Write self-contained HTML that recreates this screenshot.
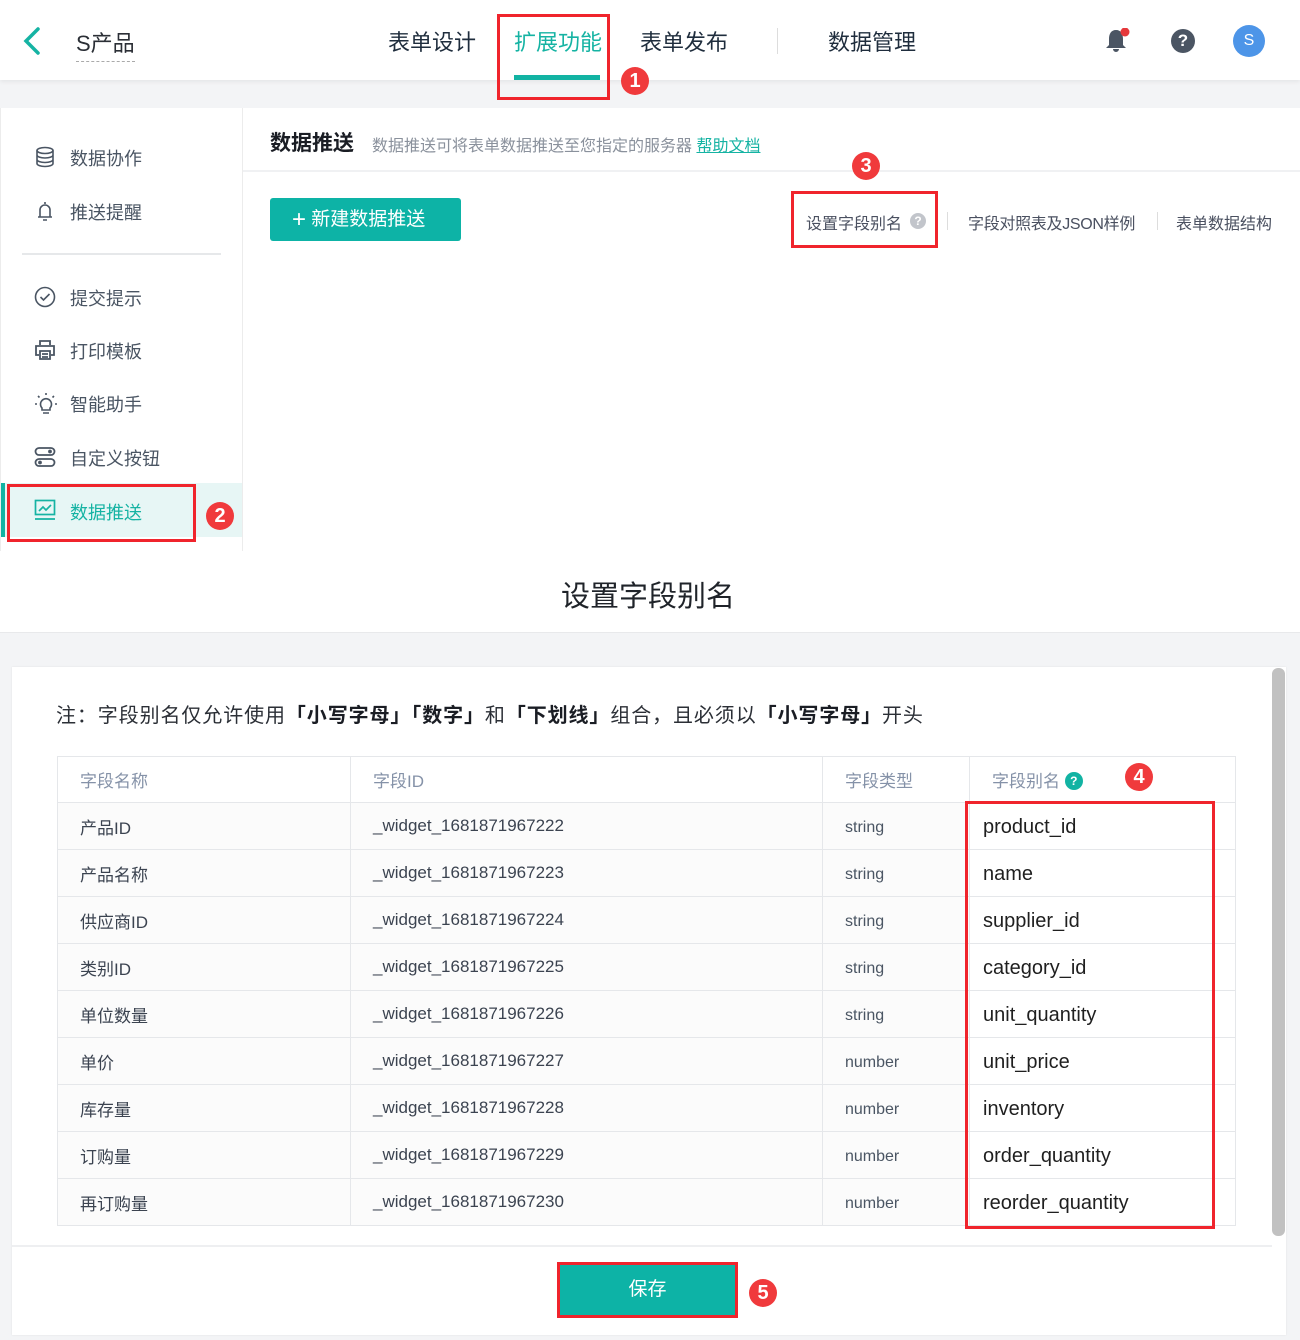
<!DOCTYPE html>
<html><head><meta charset="utf-8"><style>
*{margin:0;padding:0;box-sizing:border-box}
body{width:1300px;height:1340px;position:relative;background:#fff;font-family:"Liberation Sans","Noto Sans CJK SC",sans-serif;overflow:hidden;color:#333}
.a{position:absolute;white-space:nowrap}
.red{position:absolute;border:3px solid #f0242c;z-index:5}
.b{position:absolute;width:28px;height:28px;border-radius:50%;background:#f03a3c;color:#fff;font-size:20px;font-weight:bold;line-height:28px;text-align:center;font-family:"Liberation Sans",sans-serif;z-index:6}
.nav{font-size:22px;color:#1f2d3d;top:25px}
.si{font-size:18px;color:#4a5563;left:70px}
.ic{position:absolute;left:34px}
table{border-collapse:collapse;position:absolute;left:57px;top:756px;width:1178px;table-layout:fixed}
td{border:1px solid #e5e7ea;height:47px;padding-left:22px;font-size:17px;color:#3b4350;background:#fbfbfb}
tr.h td{background:#fff;color:#8592a8;height:46px}
td.al{background:#fff;font-size:20px;color:#1f1f1f;padding-left:13px;padding-top:3px}
td.t{font-size:16px;color:#4a5563;padding-top:3px}
</style></head><body>
<!-- gray band -->
<div class="a" style="left:0;top:80px;width:1300px;height:28px;background:#f3f4f6"></div>
<!-- header -->
<div class="a" style="left:0;top:0;width:1300px;height:80px;background:#fff;box-shadow:0 2px 4px rgba(0,0,0,.06)"></div>
<svg class="a" style="left:20px;top:26px" width="24" height="30" viewBox="0 0 24 30"><path d="M18 3 L6 15 L18 27" fill="none" stroke="#15b3a3" stroke-width="3.5" stroke-linecap="round"/></svg>
<div class="a" style="left:76px;top:26px;font-size:22px;color:#2b2f36;border-bottom:1px dashed #aaa;padding-bottom:3px">S产品</div>
<div class="a nav" style="left:388px">表单设计</div>
<div class="a nav" style="left:514px;color:#15b3a3">扩展功能</div>
<div class="a" style="left:514px;top:75px;width:86px;height:5px;background:#12b3a3"></div>
<div class="a nav" style="left:640px">表单发布</div>
<div class="a" style="left:777px;top:28px;width:1px;height:26px;background:#ddd"></div>
<div class="a nav" style="left:828px">数据管理</div>
<svg class="a" style="left:1104px;top:28px" width="28" height="26" viewBox="0 0 28 26"><path d="M12 2 C7 2 5 6 5 11 L5 17 L2 20 L22 20 L19 17 L19 11 C19 6 17 2 12 2Z M9 21 A3 3 0 0 0 15 21Z" fill="#4b5563"/><circle cx="21" cy="4" r="4.5" fill="#e5383b"/></svg>
<div class="a" style="left:1171px;top:29px;width:24px;height:24px;border-radius:50%;background:#4b5563;color:#fff;font-weight:bold;font-size:17px;line-height:24px;text-align:center">?</div>
<div class="a" style="left:1233px;top:25px;width:32px;height:32px;border-radius:50%;background:#4d95e8;color:#fff;font-size:16px;line-height:32px;text-align:center">S</div>
<div class="red" style="left:497px;top:14px;width:113px;height:86px"></div>
<div class="b" style="left:621px;top:67px">1</div>
<!-- sidebar -->
<div class="a" style="left:242px;top:108px;width:1px;height:443px;background:#ececec"></div>
<div class="a" style="left:0;top:108px;width:1px;height:443px;background:#ececec"></div>
<svg class="ic" style="top:146px" width="22" height="22" viewBox="0 0 22 22" fill="none" stroke="#4a5563" stroke-width="1.6"><ellipse cx="11" cy="4.5" rx="8" ry="3"/><path d="M3 4.5v13c0 1.7 3.6 3 8 3s8-1.3 8-3v-13M3 9c0 1.7 3.6 3 8 3s8-1.3 8-3M3 13.5c0 1.7 3.6 3 8 3s8-1.3 8-3"/></svg>
<div class="a si" style="top:145px">数据协作</div>
<svg class="ic" style="top:200px" width="22" height="22" viewBox="0 0 22 22" fill="none" stroke="#4a5563" stroke-width="1.6"><path d="M11 2v2M6 17V10a5 5 0 0 1 10 0v7M4 17h14M9 20h4"/></svg>
<div class="a si" style="top:199px">推送提醒</div>
<div class="a" style="left:22px;top:253px;width:199px;height:2px;background:#e6e8ea"></div>
<svg class="ic" style="top:286px" width="22" height="22" viewBox="0 0 22 22" fill="none" stroke="#4a5563" stroke-width="1.6"><circle cx="11" cy="11" r="9.5"/><path d="M6.5 11l3 3 6-6"/></svg>
<div class="a si" style="top:285px">提交提示</div>
<svg class="ic" style="top:339px" width="22" height="22" viewBox="0 0 22 22" fill="none" stroke="#4a5563" stroke-width="1.8"><path d="M6 6V2h10v4M5 16H2V7h18v9h-3M6 12h10v8H6zM8 15h6M8 18h6"/></svg>
<div class="a si" style="top:338px">打印模板</div>
<svg class="ic" style="top:392px" width="24" height="24" viewBox="0 0 24 24" fill="none" stroke="#4a5563" stroke-width="1.6"><path d="M12 1v2M4 4l1.5 1.5M20 4l-1.5 1.5M1 12h2M21 12h2M8 16a5.5 5.5 0 1 1 8 0v2H8zM9 21h6"/></svg>
<div class="a si" style="top:391px">智能助手</div>
<svg class="ic" style="top:446px" width="22" height="22" viewBox="0 0 22 22" fill="none" stroke="#4a5563" stroke-width="1.8"><rect x="1.5" y="2" width="19" height="7" rx="3.5"/><rect x="1.5" y="13" width="19" height="7" rx="3.5"/><circle cx="16" cy="5.5" r="1" fill="#4a5563"/><circle cx="6" cy="16.5" r="1" fill="#4a5563"/></svg>
<div class="a si" style="top:445px">自定义按钮</div>
<div class="a" style="left:1px;top:483px;width:241px;height:54px;background:#e7f6f5"></div>
<div class="a" style="left:1px;top:483px;width:4px;height:54px;background:#12b3a3"></div>
<svg class="ic" style="top:499px" width="22" height="22" viewBox="0 0 22 22" fill="none" stroke="#15b3a3" stroke-width="1.7"><rect x="1.5" y="1.5" width="19" height="14"/><path d="M1 20h20M5 12l4-4 3 3 5-5"/></svg>
<div class="a si" style="top:499px;color:#15b3a3">数据推送</div>
<div class="red" style="left:7px;top:484px;width:189px;height:58px"></div>
<div class="b" style="left:206px;top:502px">2</div>
<!-- content -->
<div class="a" style="left:270px;top:127px;font-size:21px;font-weight:bold;color:#1a1d24">数据推送</div>
<div class="a" style="left:372px;top:132px;font-size:16px;color:#8a919c">数据推送可将表单数据推送至您指定的服务器 <span style="color:#15b3a3;text-decoration:underline">帮助文档</span></div>
<div class="a" style="left:243px;top:170px;width:1057px;height:2px;background:#f0f1f3"></div>
<div class="a" style="left:270px;top:198px;width:191px;height:43px;background:#0db3a6;border-radius:3px;color:#fff;font-size:19px;line-height:43px;padding-left:22px"><span style="font-size:24px;vertical-align:-2px">+</span> 新建数据推送</div>
<div class="a" style="left:806px;top:210px;font-size:16px;color:#4a5060">设置字段别名</div>
<div class="a" style="left:910px;top:213px;width:16px;height:16px;border-radius:50%;background:#c2c5cb;color:#fff;font-size:12px;font-weight:bold;line-height:16px;text-align:center">?</div>
<div class="a" style="left:947px;top:212px;width:1px;height:18px;background:#ddd"></div>
<div class="a" style="left:968px;top:210px;font-size:16px;color:#4a5060;letter-spacing:-0.3px">字段对照表及JSON样例</div>
<div class="a" style="left:1157px;top:212px;width:1px;height:18px;background:#ddd"></div>
<div class="a" style="left:1176px;top:210px;font-size:16px;color:#4a5060">表单数据结构</div>
<div class="red" style="left:791px;top:191px;width:147px;height:57px"></div>
<div class="b" style="left:852px;top:152px">3</div>
<!-- modal title -->
<div class="a" style="left:0;top:573px;width:1296px;text-align:center;font-size:29px;color:#1f2329">设置字段别名</div>
<div class="a" style="left:0;top:632px;width:1300px;height:708px;background:#f3f4f6;border-top:1px solid #e8e9eb"></div>
<div class="a" style="left:12px;top:667px;width:1274px;height:668px;background:#fff;box-shadow:0 0 2px rgba(0,0,0,.08)"></div>
<div class="a" style="left:1272px;top:668px;width:13px;height:568px;background:#c1c1c1;border-radius:6px"></div>
<div class="a" style="left:56px;top:699px;font-size:20px;color:#2b2f36;letter-spacing:0.9px">注：字段别名仅允许使用<b style="color:#1a1d24">「小写字母」「数字」</b>和<b style="color:#1a1d24">「下划线」</b>组合，且必须以<b style="color:#1a1d24">「小写字母」</b>开头</div>
<table>
<colgroup><col style="width:293px"><col style="width:472px"><col style="width:147px"><col style="width:266px"></colgroup>
<tr class="h"><td>字段名称</td><td>字段ID</td><td>字段类型</td><td style="padding-left:22px">字段别名 <span style="display:inline-block;width:18px;height:18px;border-radius:50%;background:#12b3a3;color:#fff;font-size:12px;font-weight:bold;line-height:18px;text-align:center;vertical-align:2px">?</span></td></tr>
<tr><td>产品ID</td><td>_widget_1681871967222</td><td class="t">string</td><td class="al">product_id</td></tr>
<tr><td>产品名称</td><td>_widget_1681871967223</td><td class="t">string</td><td class="al">name</td></tr>
<tr><td>供应商ID</td><td>_widget_1681871967224</td><td class="t">string</td><td class="al">supplier_id</td></tr>
<tr><td>类别ID</td><td>_widget_1681871967225</td><td class="t">string</td><td class="al">category_id</td></tr>
<tr><td>单位数量</td><td>_widget_1681871967226</td><td class="t">string</td><td class="al">unit_quantity</td></tr>
<tr><td>单价</td><td>_widget_1681871967227</td><td class="t">number</td><td class="al">unit_price</td></tr>
<tr><td>库存量</td><td>_widget_1681871967228</td><td class="t">number</td><td class="al">inventory</td></tr>
<tr><td>订购量</td><td>_widget_1681871967229</td><td class="t">number</td><td class="al">order_quantity</td></tr>
<tr><td>再订购量</td><td>_widget_1681871967230</td><td class="t">number</td><td class="al">reorder_quantity</td></tr>
</table>
<div class="red" style="left:965px;top:801px;width:250px;height:428px"></div>
<div class="b" style="left:1125px;top:763px">4</div>
<div class="a" style="left:12px;top:1245px;width:1260px;height:2px;background:#eeeff1"></div>
<div class="a" style="left:560px;top:1265px;width:175px;height:50px;background:#0db3a6;color:#fff;font-size:19px;line-height:50px;text-align:center">保存</div>
<div class="red" style="left:557px;top:1262px;width:181px;height:56px"></div>
<div class="b" style="left:749px;top:1279px">5</div>
</body></html>
